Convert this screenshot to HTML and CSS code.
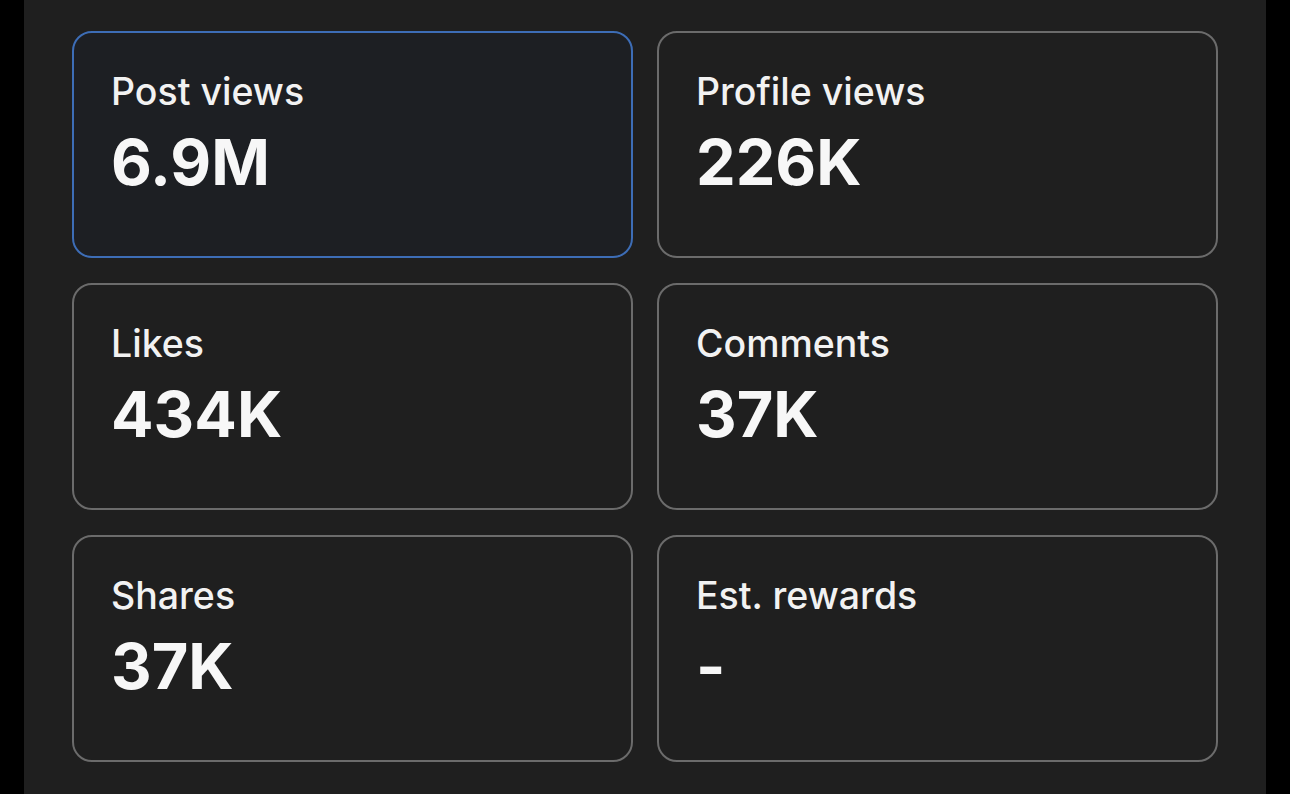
FILE: index.html
```html
<!DOCTYPE html>
<html lang="en">
<head>
<meta charset="utf-8">
<title>Insights</title>
<link rel="stylesheet" href="styles.css">
</head>
<body>
<div class="page">
  <main class="panel">
    <div class="grid">
      <div class="card card--active">
        <div class="label">Post views</div>
        <div class="value">6.9M</div>
      </div>
      <div class="card">
        <div class="label">Profile views</div>
        <div class="value">226K</div>
      </div>
      <div class="card">
        <div class="label">Likes</div>
        <div class="value">434K</div>
      </div>
      <div class="card">
        <div class="label">Comments</div>
        <div class="value">37K</div>
      </div>
      <div class="card">
        <div class="label">Shares</div>
        <div class="value">37K</div>
      </div>
      <div class="card">
        <div class="label">Est. rewards</div>
        <div class="value">-</div>
      </div>
    </div>
  </main>
</div>
</body>
</html>
```
FILE: styles.css
```css
* { box-sizing: border-box; }
html, body {
  margin: 0;
  padding: 0;
  background: #000;
  height: 100%;
}
body {
  font-family: Inter, "Noto Sans", sans-serif;
  color: #f5f5f5;
}
.page {
  height: 794px;
  padding: 0 24px;
}
.panel {
  height: 100%;
  background: #1f1f1f;
  padding: 31px 48px 0 48px;
}
.grid {
  display: grid;
  grid-template-columns: 561px 561px;
  grid-auto-rows: 227px;
  column-gap: 24px;
  row-gap: 25px;
}
.card {
  border: 2px solid #6b6b6b;
  border-radius: 20px;
  padding: 35px 37px 0 37px;
  background: #1f1f1f;
}
.card--active {
  border-color: #3d6db6;
  background: #1d1f23;
}
.label {
  font-size: 37.5px;
  font-weight: 500;
  line-height: 48px;
  color: #f2f2f2;
}
.value {
  margin-top: 8px;
  font-size: 63px;
  font-weight: 700;
  line-height: 76px;
  color: #f7f7f7;
}
```
